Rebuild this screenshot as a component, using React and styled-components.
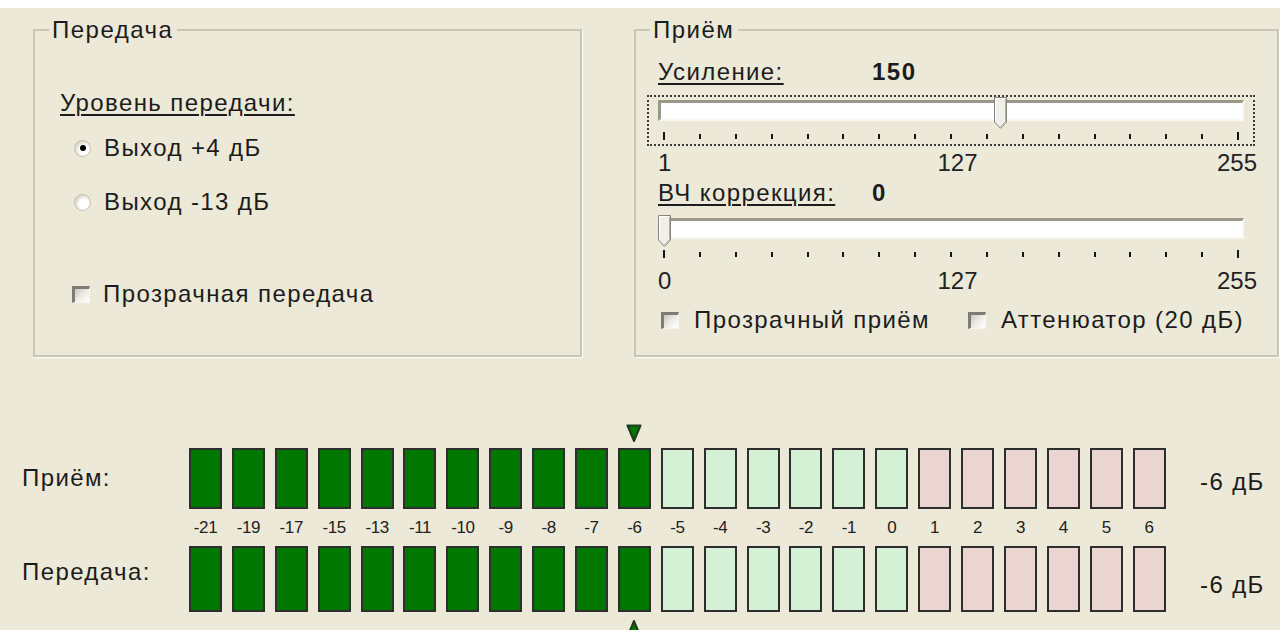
import React from 'react';
import styled, { createGlobalStyle } from 'styled-components';

const GlobalStyle = createGlobalStyle`
  html, body { margin: 0; padding: 0; background: #ECE9D8; }
  body { font-family: "Liberation Sans", Arial, sans-serif; color: #1c1c1c; }
`;

const Screen = styled.div`
  width: 1280px;
  height: 630px;
  overflow: hidden;
  display: flex;
  flex-direction: column;
  background: #ECE9D8;
`;

const TopStrip = styled.div`
  flex: none;
  height: 8px;
  background: #fff;
`;

const GroupRow = styled.div`
  display: flex;
  gap: 52px;
  padding-left: 33px;
  margin-top: 9px;
`;

const Group = styled.fieldset`
  box-sizing: border-box;
  width: ${p => p.$w}px;
  height: 340px;
  min-width: 0;
  margin: 0;
  padding: 0 0 0 14px;
  border: 2px solid #C9C6B7;
  box-shadow: 1px 1px 0 #fff;
`;

const Legend = styled.legend`
  padding: 0 4px 0 3px;
  font-size: 24px;
  line-height: 26px;
  letter-spacing: 1.5px;
`;

const Body = styled.div`
  display: flex;
  flex-direction: column;
  align-items: flex-start;
  padding-left: ${p => p.$inset}px;
`;

const Caption = styled.span`
  font-size: 24px;
  line-height: 26px;
  letter-spacing: 1.4px;
  white-space: nowrap;
`;

const Underlined = styled(Caption)`
  display: block;
  margin-top: ${p => p.$mt || 0}px;
  text-decoration: underline;
  text-underline-offset: 3px;
  text-decoration-thickness: 1.5px;
`;

const Heading = styled.div`
  display: grid;
  grid-template-columns: 214px auto;
  margin-top: ${p => p.$mt}px;
`;

const Value = styled(Caption)`
  font-weight: bold;
  letter-spacing: 1.5px;
`;

const Choice = styled.label`
  display: flex;
  align-items: center;
  height: 26px;
  margin-top: ${p => p.$mt || 0}px;
  padding-left: ${p => p.$pad || 0}px;
`;

const RadioDot = styled.span`
  box-sizing: border-box;
  width: 17px;
  height: 17px;
  margin-right: 13px;
  border-radius: 50%;
  border: 1px solid #C4C0B1;
  background: radial-gradient(circle at 62% 62%, #ffffff 36%, #E6E3D8 60%, #BDB9AB 100%);
  display: flex;
  align-items: center;
  justify-content: center;
  &::after {
    content: '';
    display: ${p => (p.$on ? 'block' : 'none')};
    width: 6px;
    height: 6px;
    border-radius: 50%;
    background: #000;
  }
`;

const CheckBox = styled.span`
  box-sizing: border-box;
  width: 18px;
  height: 17px;
  margin-right: ${p => p.$gap || 13}px;
  border-top: 3px solid #7D7B74;
  border-left: 3px solid #7D7B74;
  border-right: 1px solid #F6F5F0;
  border-bottom: 1px solid #F6F5F0;
  background: linear-gradient(135deg, #C9C7BD 0%, #EDECE6 50%, #ffffff 100%);
`;

const CheckRow = styled.div`
  display: flex;
  gap: 38px;
  margin-top: ${p => p.$mt}px;
  padding-left: 3px;
`;

const SliderFrame = styled.div`
  align-self: stretch;
  margin: ${p => p.$mt}px 22px 0 -11px;
  padding: 3px 9px 4px;
  border: 2px ${p => (p.$focus ? 'dotted #3a3a3a' : 'solid transparent')};
`;

const Track = styled.div`
  position: relative;
  box-sizing: border-box;
  height: 21px;
  background: #fff;
  border-top: 3px solid #9A978B;
  border-left: 3px solid #9A978B;
  border-right: 2px solid #F8F7F2;
  border-bottom: 2px solid #F8F7F2;
`;

const ThumbMark = styled.svg`
  position: absolute;
  top: -6px;
  width: 13px;
  height: 32px;
`;

const TickRow = styled.div`
  display: flex;
  justify-content: space-between;
  align-items: center;
  height: 8px;
  margin-top: 11px;
  padding: 0 5px;
`;

const Tick = styled.span`
  width: 2px;
  height: ${p => (p.$end ? 8 : 5)}px;
  background: #161616;
`;

const ScaleRow = styled.div`
  align-self: stretch;
  display: grid;
  grid-template-columns: 1fr auto 1fr;
  margin: 4px 20px 0 0;
  font-size: 24px;
  line-height: 26px;
  color: #222;
  & > :first-child { justify-self: start; }
  & > :last-child { justify-self: end; }
`;

function Slider({ value, min, max, focus, mt }) {
  const frac = (value - min) / (max - min);
  return (
    <SliderFrame $focus={focus} $mt={mt}>
      <Track>
        <ThumbMark viewBox="0 0 13 32" style={{ left: `calc(${frac} * (100% - 7px) - 3.5px)` }}>
          <polygon points="0.5,0.5 12.5,0.5 12.5,25 6.5,31.3 0.5,25" fill="#F1F0E8" stroke="#86847A" />
          <polyline points="1.5,24.5 1.5,1.5 11.5,1.5" fill="none" stroke="#ffffff" />
          <polyline points="11.5,2 11.5,24.6 6.5,30" fill="none" stroke="#B3B1A5" />
        </ThumbMark>
      </Track>
      <TickRow>
        {Array.from({ length: 17 }, (_, i) => (
          <Tick key={i} $end={i === 0 || i === 16} />
        ))}
      </TickRow>
    </SliderFrame>
  );
}

const Meter = styled.div`
  display: grid;
  grid-template-columns: 167px 977px auto;
  grid-template-rows: 24px 61px 37px 66px 20px;
  padding-left: 22px;
  margin-top: 67px;
`;

const SideLabel = styled(Caption)`
  grid-column: ${p => p.$col};
  grid-row: ${p => p.$row};
  align-self: start;
  margin-top: ${p => p.$mt}px;
  padding-left: ${p => p.$pad || 0}px;
`;

const Strip = styled.div`
  grid-column: 2;
  grid-row: ${p => p.$row};
  display: flex;
  gap: 9.9px;
`;

const Cell = styled.div`
  flex: none;
  width: 33px;
  display: flex;
  justify-content: center;
  align-items: ${p => p.$align || 'stretch'};
  padding-top: ${p => p.$pt || 0}px;
  box-sizing: border-box;
`;

const Bar = styled.div`
  box-sizing: border-box;
  width: 100%;
  border: 2px solid #2E2E2E;
  background: ${p => p.$fill};
`;

const ScaleText = styled.span`
  font-size: 17px;
  line-height: 37px;
  letter-spacing: -0.4px;
  color: #222;
  white-space: nowrap;
`;

const Marker = styled.svg`
  width: 16px;
  height: 18px;
`;

const SCALE = [-21, -19, -17, -15, -13, -11, -10, -9, -8, -7, -6, -5, -4, -3, -2, -1, 0, 1, 2, 3, 4, 5, 6];

function fillFor(v, level) {
  if (v <= level) return '#007800';
  if (v <= 0) return '#D5F1D5';
  return '#EBD5D1';
}

function BarStrip({ row, level }) {
  return (
    <Strip $row={row}>
      {SCALE.map(v => (
        <Cell key={v}>
          <Bar $fill={fillFor(v, level)} />
        </Cell>
      ))}
    </Strip>
  );
}

function MarkerStrip({ row, level, up }) {
  return (
    <Strip $row={row}>
      {SCALE.map(v => (
        <Cell key={v} $align="flex-start" $pt={up ? 8 : 0}>
          {v === level && (
            <Marker viewBox="0 0 16 18">
              {up ? (
                <polygon points="1.5,16.5 14.5,16.5 8,1" fill="#007800" stroke="#1F3A1F" strokeWidth="2" strokeLinejoin="round" />
              ) : (
                <polygon points="1.5,1.5 14.5,1.5 8,17" fill="#007800" stroke="#1F3A1F" strokeWidth="2" strokeLinejoin="round" />
              )}
            </Marker>
          )}
        </Cell>
      ))}
    </Strip>
  );
}

export default function App() {
  const rxLevel = -6;
  const txLevel = -6;
  return (
    <Screen>
      <GlobalStyle />
      <TopStrip />
      <GroupRow>
        <Group $w={549}>
          <Legend>Передача</Legend>
          <Body $inset={11}>
            <Underlined $mt={47}>Уровень передачи:</Underlined>
            <Choice $mt={19} $pad={14}>
              <RadioDot $on />
              <Caption>Выход +4 дБ</Caption>
            </Choice>
            <Choice $mt={28} $pad={14}>
              <RadioDot />
              <Caption>Выход -13 дБ</Caption>
            </Choice>
            <Choice $mt={66} $pad={12}>
              <CheckBox />
              <Caption>Прозрачная передача</Caption>
            </Choice>
          </Body>
        </Group>
        <Group $w={645}>
          <Legend>Приём</Legend>
          <Body $inset={8}>
            <Heading $mt={16}>
              <Underlined>Усиление:</Underlined>
              <Value>150</Value>
            </Heading>
            <Slider value={150} min={1} max={255} focus mt={10} />
            <ScaleRow>
              <span>1</span>
              <span>127</span>
              <span>255</span>
            </ScaleRow>
            <Heading $mt={4}>
              <Underlined>ВЧ коррекция:</Underlined>
              <Value>0</Value>
            </Heading>
            <Slider value={0} min={0} max={255} mt={7} />
            <ScaleRow>
              <span>0</span>
              <span>127</span>
              <span>255</span>
            </ScaleRow>
            <CheckRow $mt={13}>
              <Choice>
                <CheckBox $gap={15} />
                <Caption>Прозрачный приём</Caption>
              </Choice>
              <Choice>
                <CheckBox $gap={15} />
                <Caption>Аттенюатор (20 дБ)</Caption>
              </Choice>
            </CheckRow>
          </Body>
        </Group>
      </GroupRow>

      <Meter>
        <MarkerStrip row={1} level={rxLevel} />
        <SideLabel $col={1} $row={2} $mt={17}>Приём:</SideLabel>
        <BarStrip row={2} level={rxLevel} />
        <SideLabel $col={3} $row={2} $mt={21} $pad={34}>-6 дБ</SideLabel>
        <Strip $row={3}>
          {SCALE.map(v => (
            <Cell key={v}>
              <ScaleText>{v}</ScaleText>
            </Cell>
          ))}
        </Strip>
        <SideLabel $col={1} $row={4} $mt={13}>Передача:</SideLabel>
        <BarStrip row={4} level={txLevel} />
        <SideLabel $col={3} $row={4} $mt={26} $pad={34}>-6 дБ</SideLabel>
        <MarkerStrip row={5} level={txLevel} up />
      </Meter>
    </Screen>
  );
}
